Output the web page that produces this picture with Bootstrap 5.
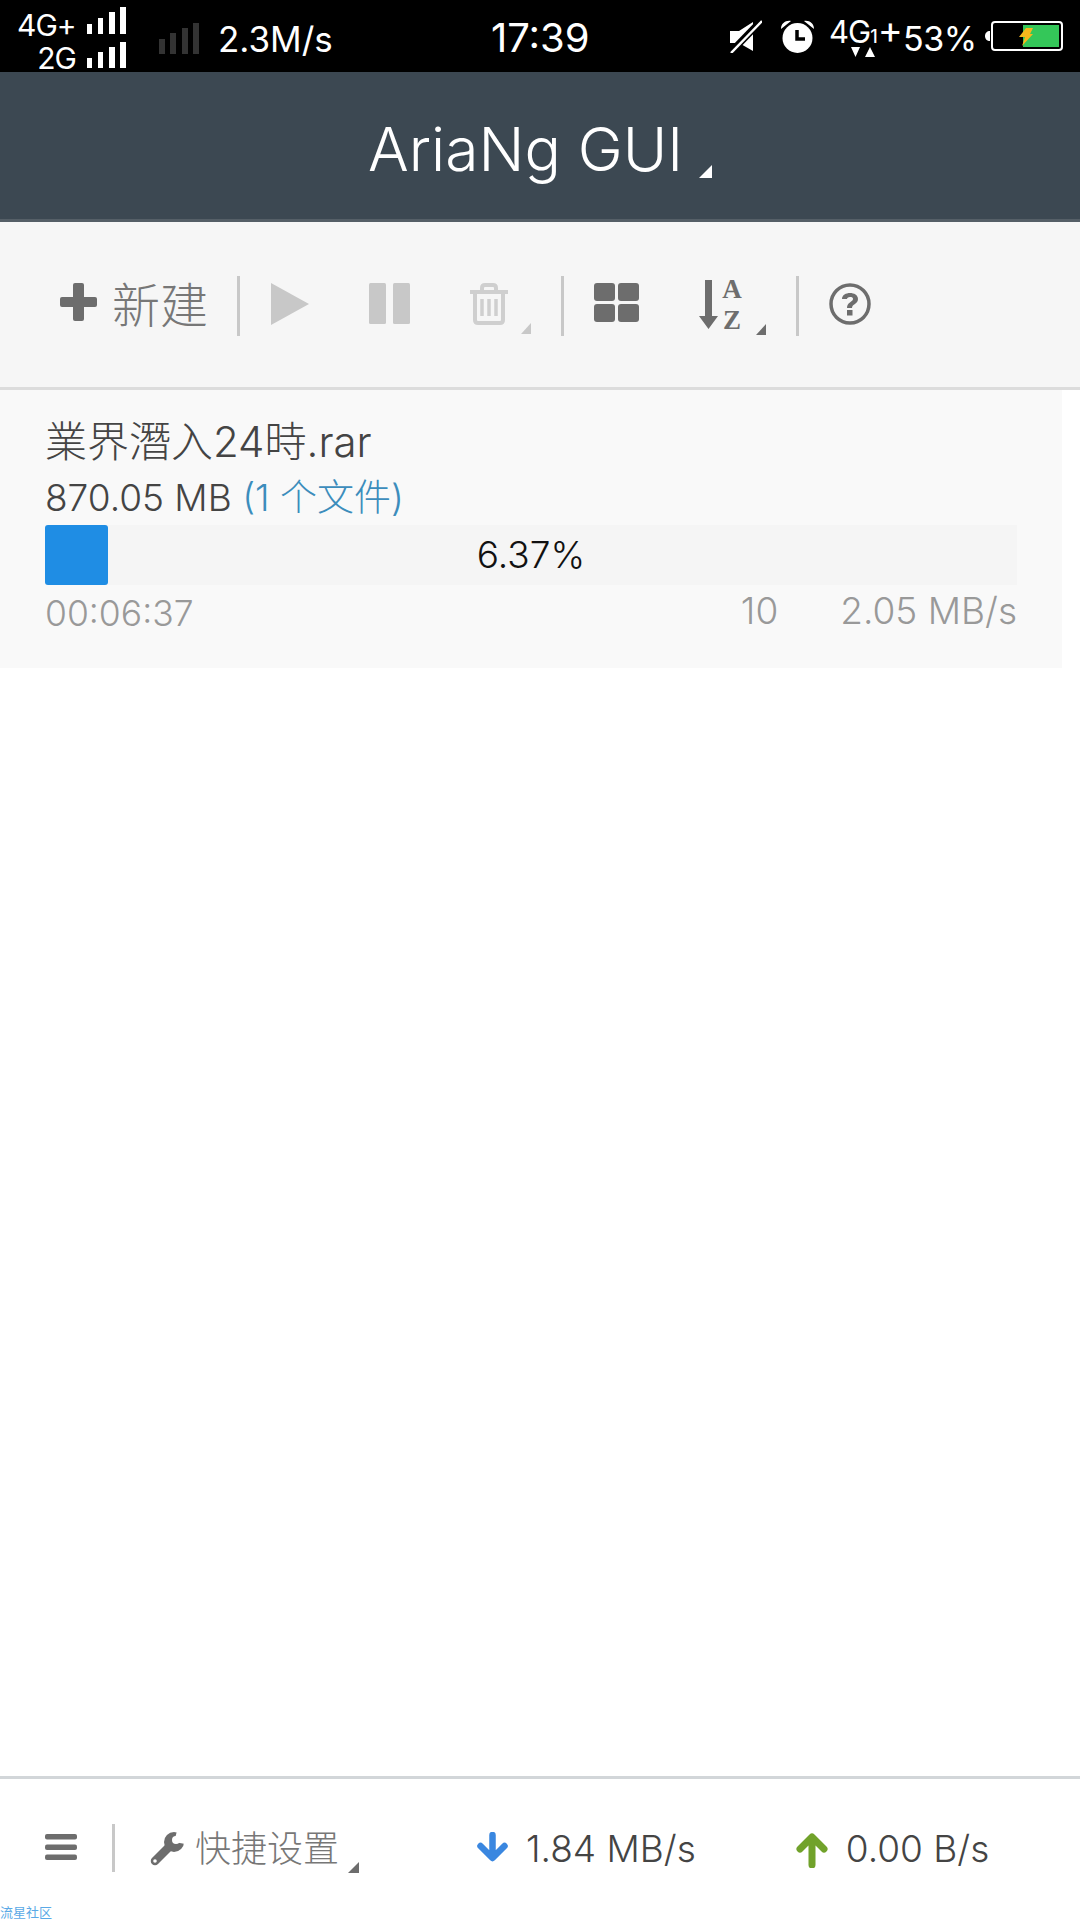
<!doctype html>
<html lang="zh">
<head>
<meta charset="utf-8">
<title>AriaNg GUI</title>
<link href="https://cdn.jsdelivr.net/npm/bootstrap@5.3.0/dist/css/bootstrap.min.css" rel="stylesheet">
<style>
html,body{height:1920px;overflow:hidden}
body{font-family:Inter,"Noto Sans CJK SC",sans-serif;font-weight:300;background:#fff;color:#444}
svg{display:block;flex:none}
.page{height:1920px}
.sb{height:72px;background:#000;color:#fff;font-weight:400;line-height:1}
.sb-left{width:125px;margin-left:17px;padding-top:7px}
.sb-line{height:35px}
.sb-l1{font-size:30px;width:69px;text-align:left;letter-spacing:-1px;margin-top:3px}
.sb-l2{font-size:30px;width:59px;margin-right:10px;text-align:right;letter-spacing:-1px;margin-top:1px}
.sb-dim{margin-left:17px;margin-top:23px}
.sb-speed{font-size:35px;margin-left:19px;margin-top:22px;width:273px}
.sb-time{font-size:40px;margin-top:18px;width:110px;white-space:nowrap}
.sb-mute{margin-left:129px;margin-top:20px}
.sb-alarm{margin-left:18px;margin-top:20px}
.sb-net{margin-left:14px;margin-top:16px;font-size:31px;width:65px;height:50px;letter-spacing:-1px}
.sb-net small{font-size:18px;font-weight:500;letter-spacing:0}
.sb-net b{font-size:38px;font-weight:400;line-height:.7}
.sb-tri{position:absolute;left:22px;top:31px}
.sb-pct{font-size:34px;margin-left:9px;margin-top:22px;width:70px;letter-spacing:-.5px}
.sb-batt{margin-left:11px;margin-top:20px}
.head{height:150px;background:#3c4852;border-bottom:3px solid #555f67;color:#fff;font-size:60.500px;padding-left:368px;line-height:1;padding-top:47px}
.head-caret{margin-left:16px;margin-top:46px}
.bar{height:168px;background:#f6f6f6;border-bottom:3px solid #dcdcdc;padding:54px 0 0 60px;color:#777}
.bar-txt{font-size:48px;line-height:1;margin-left:15px;margin-top:6px;color:#777}
.vline{width:3px;height:60px;background:#c8c8c8;flex:none}
.v1{margin-left:29px}
.play{margin:7px 0 0 31px}
.pause{margin:7px 0 0 60px}
.trash{margin:7px 0 0 60px}
.c-off{margin:47px 0 0 13px}
.v2{margin-left:30px}
.grid4{margin:7px 0 0 30px}
.sort{margin:4px 0 0 60px;width:44px;color:#6d6d6d}
.az{width:22px;margin-left:3px;font-family:"Liberation Serif",serif;font-weight:700;font-size:27px;line-height:18px;text-align:center}
.az div{height:18px;margin-bottom:13px}
.c-on{margin:48px 0 0 13px}
.help{margin:7px 0 0 30px}
.plus{margin-top:7px}
.task{width:1062px;height:278px;background:#f9f9f9;padding:27px 45px 0}
.task-name{font-size:42px;line-height:50px;color:#444}
.task-size{font-size:37px;line-height:44px;margin-top:9px;color:#444}
.task-size span{color:#3c8dbc}
.track{height:60px;width:972px;background:#f5f5f5;border-radius:0;margin-top:5px}
.fill{width:63px;background:#1f8de4;border-radius:3px}
.track-txt{position:absolute;inset:0;text-align:center;font-size:37px;line-height:60px;color:#111}
.task-foot{font-size:37px;line-height:40px;color:#999;margin-top:6px;width:972px}
.time{margin-top:3px;font-size:35.500px}
.conn{margin-right:62px}
.foot{height:129px;border-top:3px solid #d2d6d9;padding:45px 0 0 45px;color:#777}
.burger{margin-top:10px}
.f-v{height:48px;margin-left:35px}
.wrench{margin:8px 0 0 35px}
.foot-txt{font-size:36px;line-height:1;margin:7px 0 0 11px;color:#777}
.f-c{margin:38px 0 0 9px}
.down{margin:8px 0 0 118px}
.foot-speed{font-size:37px;line-height:1;margin:6px 0 0 18px;color:#444}
.up{margin:8px 0 0 100px}
.up + .foot-speed{margin-left:18px}
.credit{font-size:13px;line-height:14px;color:#5aa9e6;font-weight:400;height:15px}
</style>
</head>
<body>
<div class="page d-flex flex-column">

<div class="sb d-flex align-items-start">
  <div class="sb-left">
    <div class="sb-line d-flex align-items-start">
      <span class="sb-l1">4G+</span>
      <svg width="40" height="27" viewBox="0 0 40 27" fill="#fff"><rect x="1" y="17" width="5" height="10"/><rect x="12" y="11" width="5" height="16"/><rect x="23" y="5" width="6" height="22"/><rect x="34" y="0" width="6" height="27"/></svg>
    </div>
    <div class="sb-line d-flex align-items-start">
      <span class="sb-l2">2G</span>
      <svg width="40" height="26" viewBox="0 0 40 26" fill="#fff"><rect x="1" y="16" width="5" height="10"/><rect x="12" y="10" width="5" height="16"/><rect x="23" y="5" width="6" height="21"/><rect x="34" y="0" width="6" height="26"/></svg>
    </div>
  </div>
  <svg class="sb-dim" width="40" height="31" viewBox="0 0 40 31" fill="#333"><rect x="0" y="16" width="6" height="15"/><rect x="11" y="10" width="6" height="21"/><rect x="23" y="5" width="6" height="26"/><rect x="34" y="0" width="6" height="31"/></svg>
  <div class="sb-speed">2.3M/s</div>
  <div class="sb-time">17:39</div>
  <svg class="sb-mute" width="32" height="33" viewBox="0 0 32 33"><path fill="#fff" d="M0 11h9l14-9v29L9 23H0z"/><path d="M0 33L32 0" stroke="#000" stroke-width="7"/><path d="M1 33L32 1" stroke="#fff" stroke-width="2.5"/></svg>
  <svg class="sb-alarm" width="35" height="33" viewBox="0 0 35 33"><circle cx="17.500" cy="18" r="15" fill="#fff"/><path d="M17 10v9h8" fill="none" stroke="#000" stroke-width="3.500"/><path d="M1 9C1 3 6 0 11 1zM34 9c0-6-5-9-10-8z" fill="#fff"/></svg>
  <div class="sb-net position-relative text-nowrap">4G<small>1</small><b>+</b>
    <svg class="sb-tri" width="24" height="11" viewBox="0 0 24 11" fill="#fff"><path d="M0 0h9L4.500 10zM14 10h10L19 0z"/></svg>
  </div>
  <div class="sb-pct">53%</div>
  <svg class="sb-batt" width="79" height="32" viewBox="0 0 79 32"><path d="M6 11v10C3 21 1 19 1 16s2-5 5-5z" fill="#fff"/><rect x="8" y="2" width="70" height="28" rx="3" fill="none" stroke="#fff" stroke-width="2"/><rect x="39" y="5" width="36" height="22" fill="#34c759"/><path d="M42 8h7l-3 6h3L38 26l3-9h-6z" fill="#f7b81c"/></svg>
</div>

<div class="head d-flex align-items-start">
  <span>AriaNg GUI</span>
  <svg class="head-caret" width="13" height="13" viewBox="0 0 13 13" fill="#fff"><path d="M13 0v13H0z"/></svg>
</div>

<div class="bar d-flex align-items-start">
  <svg class="plus" width="37" height="38" viewBox="0 0 37 38" fill="#6d6d6d"><rect x="0" y="14" width="37" height="10" rx="2"/><rect x="13" y="0" width="11" height="38" rx="2"/></svg>
  <span class="bar-txt">新建</span>
  <span class="vline v1"></span>
  <svg class="play" width="38" height="42" viewBox="0 0 38 42" fill="#c8c8c8"><path d="M0 0l38 21L0 42z"/></svg>
  <svg class="pause" width="41" height="41" viewBox="0 0 41 41" fill="#c8c8c8"><rect width="17" height="41" rx="1.500"/><rect x="24" width="17" height="41" rx="1.500"/></svg>
  <svg class="trash" width="38" height="42" viewBox="0 0 38 42" fill="none" stroke="#cfcfcf"><path stroke-width="4" d="M0 9h38M12 9V5q0-3 3-3h8q3 0 3 3v4M5 9v28q0 3 3 3h22q3 0 3-3V9"/><path stroke-width="3.500" d="M12 16v17M19 16v17M26 16v17"/></svg>
  <svg class="c-off" width="10" height="11" viewBox="0 0 10 11" fill="#c8c8c8"><path d="M10 0v11H0z"/></svg>
  <span class="vline v2"></span>
  <svg class="grid4" width="45" height="39" viewBox="0 0 45 39" fill="#6d6d6d"><rect width="21" height="18" rx="3"/><rect x="24" width="21" height="18" rx="3"/><rect y="21" width="21" height="18" rx="3"/><rect x="24" y="21" width="21" height="18" rx="3"/></svg>
  <div class="sort d-flex">
    <svg width="19" height="50" viewBox="0 0 19 50" fill="#6d6d6d"><path d="M6 0h7v36h6L9.500 49 0 36h6z"/></svg>
    <div class="az"><div>A</div><div>Z</div></div>
  </div>
  <svg class="c-on" width="10" height="11" viewBox="0 0 10 11" fill="#6d6d6d"><path d="M10 0v11H0z"/></svg>
  <span class="vline v2"></span>
  <svg class="help" width="42" height="42" viewBox="0 0 42 42"><circle cx="21" cy="21" r="19" fill="none" stroke="#6d6d6d" stroke-width="3.500"/><path d="M13 16c0-4 4-6 8-6s8 2 8 6c0 5-6 5-6 9h-5c0-6 6-6 6-9 0-1.500-1-2-3-2s-3 1-3 2z" fill="#6d6d6d"/><rect x="18" y="27" width="5.500" height="5.500" fill="#6d6d6d"/></svg>
</div>

<div class="task">
  <div class="task-name">業界潛入24時.rar</div>
  <div class="task-size">870.05 MB <span>(1 个文件)</span></div>
  <div class="progress track position-relative">
    <div class="progress-bar fill"></div>
    <div class="track-txt">6.37%</div>
  </div>
  <div class="task-foot d-flex align-items-start">
    <span class="time me-auto">00:06:37</span>
    <span class="conn">10</span>
    <span>2.05 MB/s</span>
  </div>
</div>

<div class="flex-grow-1"></div>

<div class="foot d-flex align-items-start">
  <svg class="burger" width="32" height="26" viewBox="0 0 32 26" fill="#6d6d6d"><rect width="32" height="5.500" rx="2"/><rect y="10.500" width="32" height="5.500" rx="2"/><rect y="20.500" width="32" height="5.500" rx="2"/></svg>
  <span class="vline f-v"></span>
  <svg class="wrench" width="34" height="34" viewBox="0 0 34 34"><path d="M5 29L19 15" stroke="#6d6d6d" stroke-width="8.500" stroke-linecap="round"/><circle cx="24" cy="10" r="10" fill="#6d6d6d"/><path d="M24 10L27 -1H36V12z" fill="#fff"/><circle cx="26" cy="8" r="4" fill="#fff"/><circle cx="5" cy="29" r="1.800" fill="#fff"/></svg>
  <span class="foot-txt">快捷设置</span>
  <svg class="f-c" width="11" height="11" viewBox="0 0 11 11" fill="#6d6d6d"><path d="M11 0v11H0z"/></svg>
  <svg class="down" width="31" height="30" viewBox="0 0 31 30"><path d="M15.500 3v22M3.500 14l12 12 12-12" fill="none" stroke="#3a87e0" stroke-width="6.500" stroke-linecap="round" stroke-linejoin="round"/></svg>
  <span class="foot-speed">1.84 MB/s</span>
  <svg class="up" width="32" height="36" viewBox="0 0 32 36"><path d="M16 33V6M4 17L16 5l12 12" fill="none" stroke="#71a22b" stroke-width="7" stroke-linecap="round" stroke-linejoin="round"/></svg>
  <span class="foot-speed">0.00 B/s</span>
</div>
<div class="credit">流星社区</div>

</div>
<script src="https://cdn.jsdelivr.net/npm/bootstrap@5.3.0/dist/js/bootstrap.bundle.min.js"></script>
</body>
</html>
